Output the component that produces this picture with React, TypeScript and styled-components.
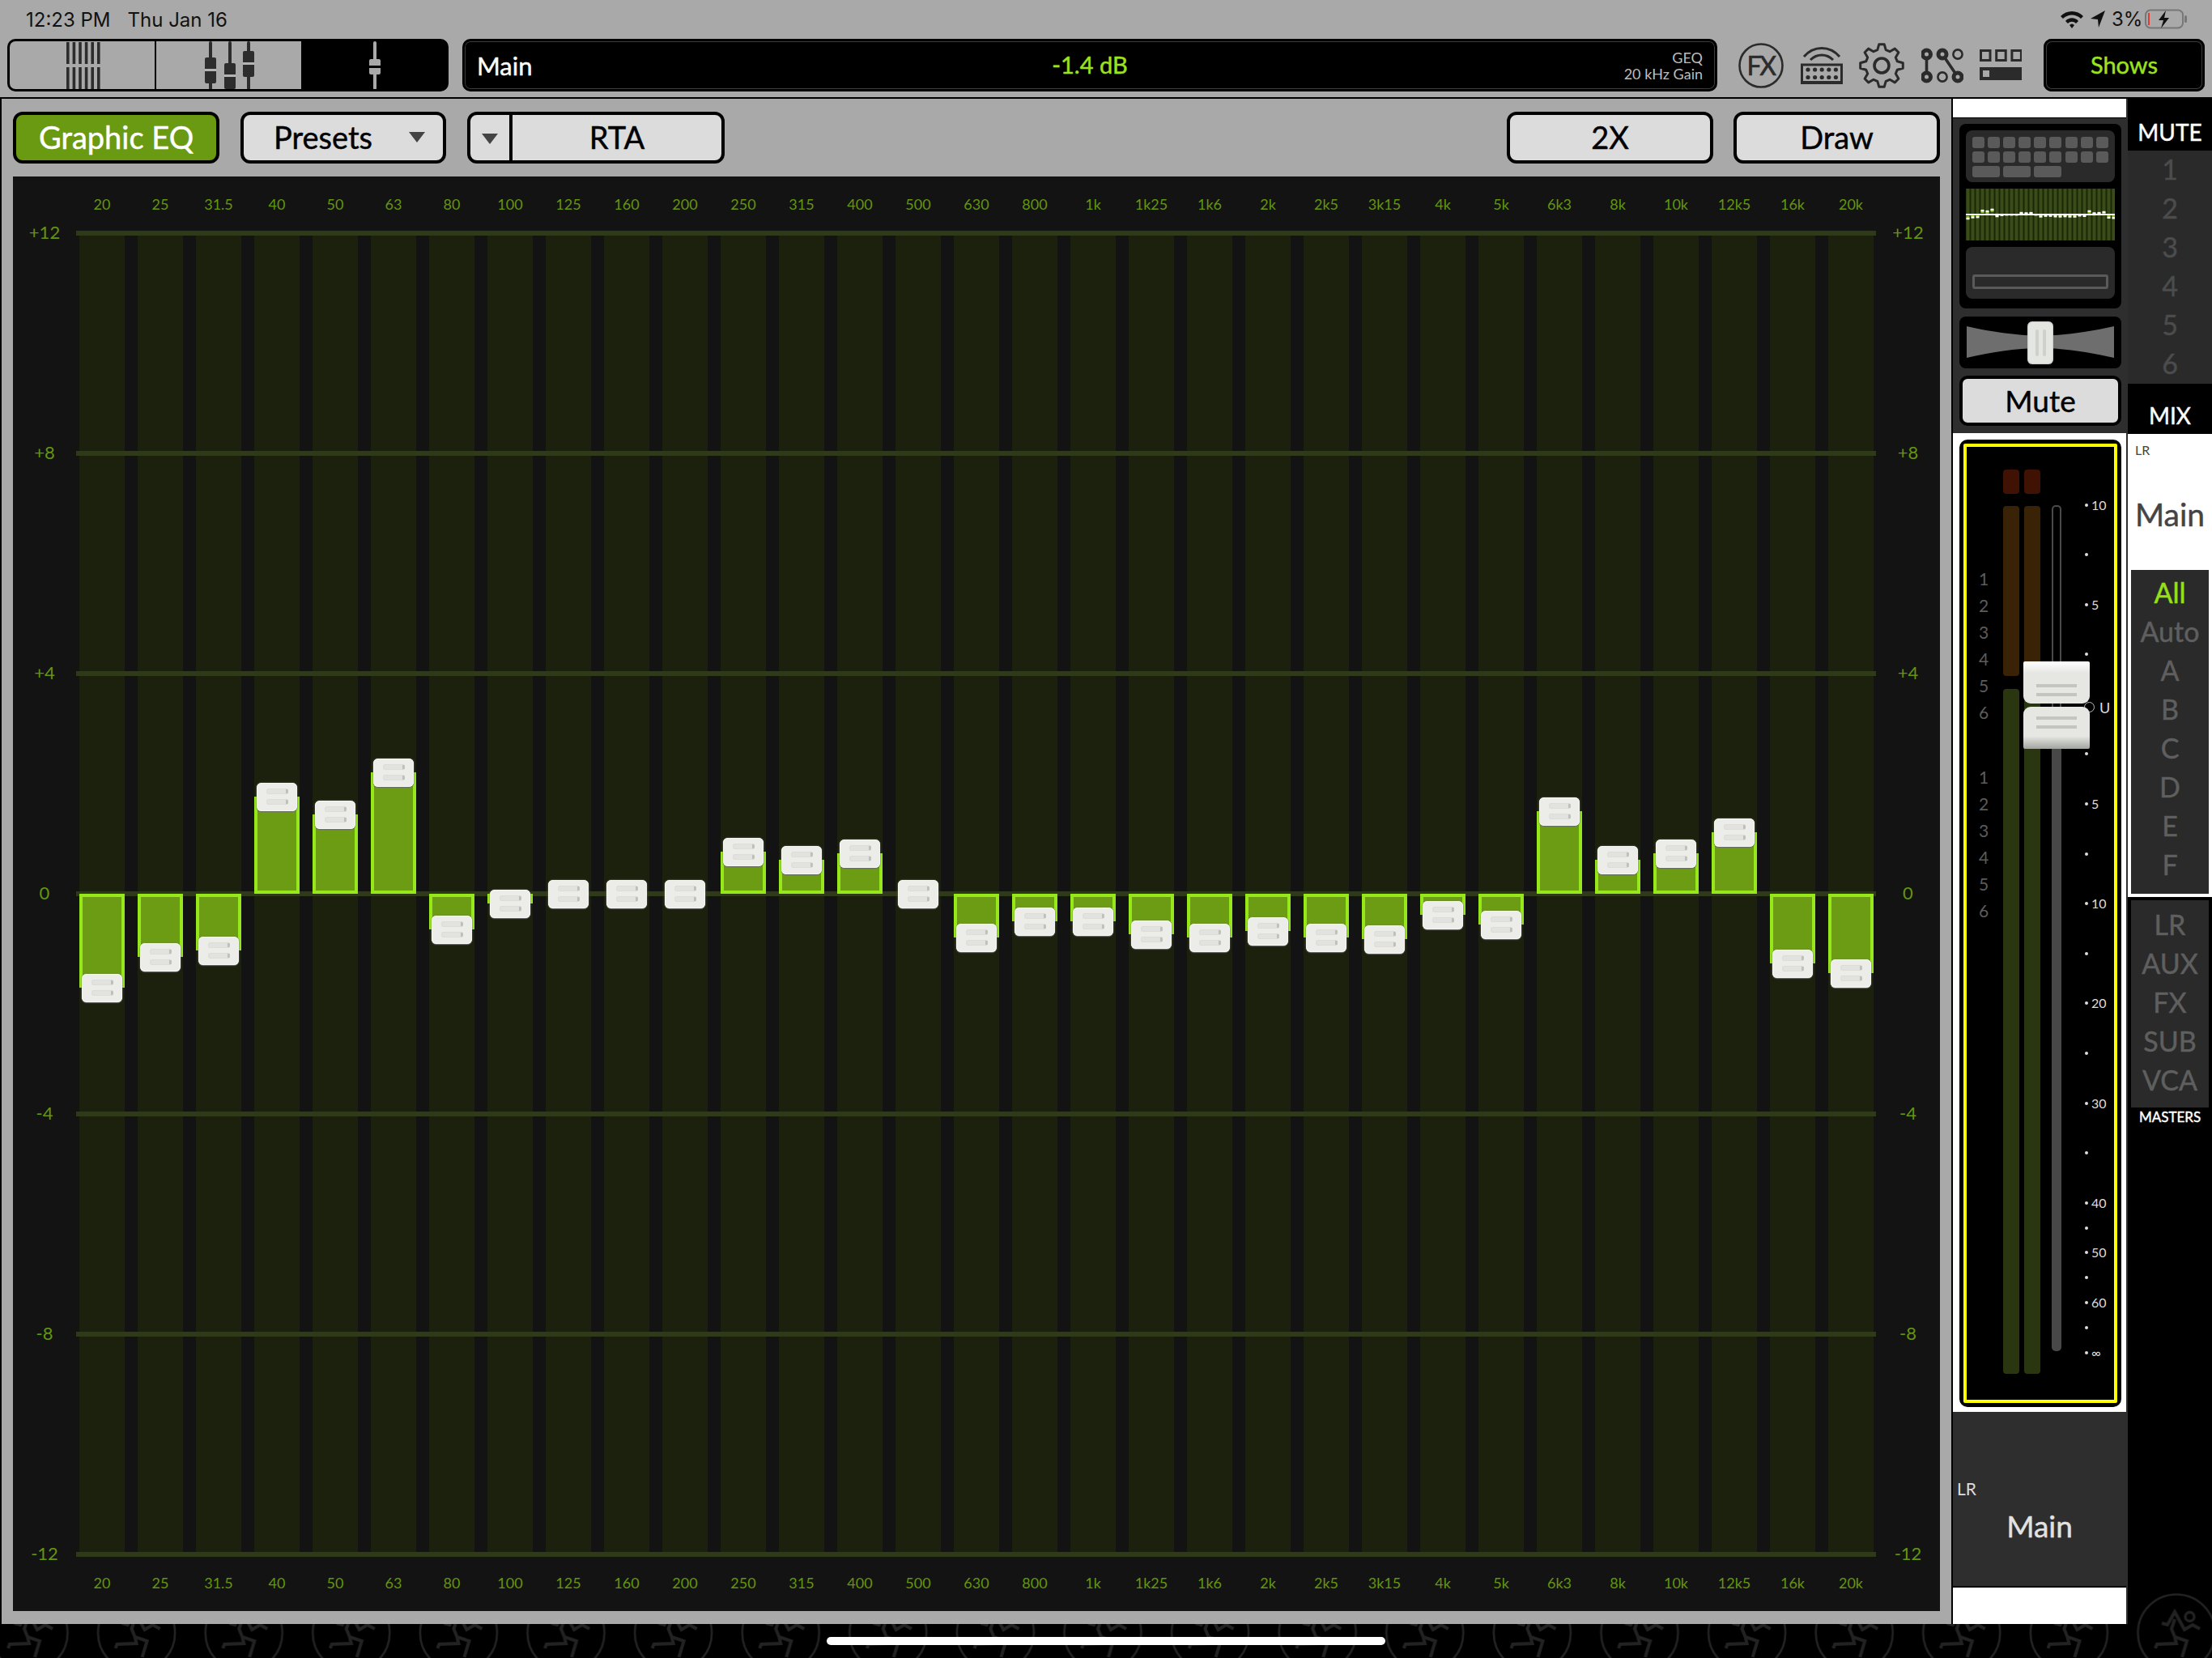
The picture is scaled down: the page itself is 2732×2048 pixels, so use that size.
import { FC } from 'react';
import styled, { createGlobalStyle } from 'styled-components';

const FONT = `Lato, 'Open Sans', sans-serif`;
const ZERO_Y = 819;

// offset of each band's end from the zero line, in pixels (up is positive)
const BANDS: { name: string; px: number }[] = [
	{ name: '20', px: -116 },
	{ name: '25', px: -78 },
	{ name: '31.5', px: -70 },
	{ name: '40', px: 120 },
	{ name: '50', px: 98 },
	{ name: '63', px: 150 },
	{ name: '80', px: -44 },
	{ name: '100', px: -12 },
	{ name: '125', px: 0 },
	{ name: '160', px: 0 },
	{ name: '200', px: 0 },
	{ name: '250', px: 52 },
	{ name: '315', px: 42 },
	{ name: '400', px: 50 },
	{ name: '500', px: 0 },
	{ name: '630', px: -54 },
	{ name: '800', px: -34 },
	{ name: '1k', px: -34 },
	{ name: '1k25', px: -50 },
	{ name: '1k6', px: -54 },
	{ name: '2k', px: -46 },
	{ name: '2k5', px: -54 },
	{ name: '3k15', px: -56 },
	{ name: '4k', px: -26 },
	{ name: '5k', px: -38 },
	{ name: '6k3', px: 102 },
	{ name: '8k', px: 42 },
	{ name: '10k', px: 50 },
	{ name: '12k5', px: 76 },
	{ name: '16k', px: -86 },
	{ name: '20k', px: -98 },
];

const SCALE = ['+12', '+8', '+4', '0', '-4', '-8', '-12'];

const FADER_MARKS: { label?: string; gap: number; unity?: boolean }[] = [
	{ label: '10', gap: 71.5 },
	{ gap: 61.6 },
	{ label: '5', gap: 61.6 },
	{ gap: 61.6 },
	{ label: 'U', gap: 65.6, unity: true },
	{ gap: 57.6 },
	{ label: '5', gap: 61.6 },
	{ gap: 61.6 },
	{ label: '10', gap: 61.6 },
	{ gap: 61.6 },
	{ label: '20', gap: 61.6 },
	{ gap: 61.6 },
	{ label: '30', gap: 61.6 },
	{ gap: 61.6 },
	{ label: '40', gap: 61.6 },
	{ gap: 30.8 },
	{ label: '50', gap: 30.8 },
	{ gap: 30.8 },
	{ label: '60', gap: 30.8 },
	{ gap: 30.8 },
	{ label: '∞', gap: 30.8 },
];

const GlobalStyle = createGlobalStyle`
	html, body {
		margin: 0;
		padding: 0;
		background: #000;
	}
	* {
		box-sizing: border-box;
	}
`;

const medium = `-webkit-text-stroke: 0.45px currentColor;`;

const FaderIcons = () => (
	<svg width="62" height="60" viewBox="0 0 62 60">
		{[
			[8, 20],
			[32, 27],
			[55, 12],
		].map(([x, y]) => (
			<g key={x}>
				<rect x={x - 2} y={0} width={4} height={60} rx={2} fill="#2d2d2d" />
				<rect x={x - 7} y={y} width={14} height={32} rx={2} fill="#2d2d2d" />
				<rect x={x - 7} y={y + 14} width={14} height={3} fill="#b5b5b5" />
			</g>
		))}
	</svg>
);

const ChannelIcons = () => (
	<svg width="44" height="60" viewBox="0 0 44 60">
		{[0, 1].map((row) =>
			[0, 1, 2, 3, 4, 5].map((col) => (
				<rect
					key={`${row}-${col}`}
					x={2 + col * 7.6}
					y={1 + row * 31}
					width={3.6}
					height={27}
					fill="#2d2d2d"
				/>
			))
		)}
	</svg>
);

const SingleFaderIcon = () => (
	<svg width="16" height="60" viewBox="0 0 16 60">
		<rect x={6} y={0} width={4} height={60} rx={2} fill="#a9a9a9" />
		<rect x={1} y={22} width={14} height={19} rx={2} fill="#a9a9a9" />
		<rect x={1} y={30} width={14} height={3} fill="#000" />
	</svg>
);

const FxIcon = () => (
	<svg width="56" height="56" viewBox="0 0 56 56">
		<circle cx="28" cy="28" r="26.5" fill="none" stroke="#2b2b2b" strokeWidth="2.6" />
		<text
			x="27.5"
			y="39.5"
			textAnchor="middle"
			fontFamily="Lato, sans-serif"
			fontSize="32"
			letterSpacing="-2.5"
			fill="#2b2b2b"
			stroke="#2b2b2b"
			strokeWidth="0.6"
		>
			FX
		</text>
	</svg>
);

const WifiKeysIcon = () => (
	<svg width="52" height="48" viewBox="0 0 52 48">
		<path d="M4 13C16 -1 36 -1 48 13" fill="none" stroke="#2b2b2b" strokeWidth="3" />
		<path d="M12 17C20 9 32 9 40 17" fill="none" stroke="#2b2b2b" strokeWidth="3" />
		<rect x="1.5" y="23" width="49" height="22" fill="none" stroke="#2b2b2b" strokeWidth="3" />
		<rect x="0" y="43" width="52" height="4" fill="#2b2b2b" />
		{[0, 1].map((row) =>
			[0, 1, 2, 3, 4].map((col) => (
				<circle key={`${row}${col}`} cx={9 + col * 8.6} cy={29 + row * 9.5} r={2.6} fill="#2b2b2b" />
			))
		)}
	</svg>
);

const gearPath = () => {
	const pts: string[] = [];
	const polar = (r: number, deg: number) => {
		const a = ((deg - 90) * Math.PI) / 180;
		return `${(28 + r * Math.cos(a)).toFixed(1)} ${(28 + r * Math.sin(a)).toFixed(1)}`;
	};
	for (let i = 0; i < 8; i++) {
		const c = i * 45;
		pts.push(polar(20, c - 15), polar(26.5, c - 7), polar(26.5, c + 7), polar(20, c + 15));
	}
	return `M${pts.join('L')}Z`;
};

const GearIcon = () => (
	<svg width="56" height="56" viewBox="0 0 56 56">
		<path d={gearPath()} fill="none" stroke="#2b2b2b" strokeWidth="3" strokeLinejoin="round" />
		<circle cx="28" cy="28" r="9" fill="none" stroke="#2b2b2b" strokeWidth="3.6" />
	</svg>
);

const RoutingIcon = () => (
	<svg width="52" height="44" viewBox="0 0 52 44">
		<path d="M6.5 8V36M26 8L45 36" stroke="#2b2b2b" strokeWidth="3.6" fill="none" />
		{[
			[6.5, 8, 5],
			[26, 8, 5],
			[6.5, 36, 5],
			[45, 36, 5],
		].map(([x, y, w]) => (
			<circle key={`${x}${y}`} cx={x} cy={y} r={5} fill="#a9a9a9" stroke="#2b2b2b" strokeWidth={w} />
		))}
		{[
			[45, 8],
			[26, 36],
		].map(([x, y]) => (
			<circle key={`${x}${y}`} cx={x} cy={y} r={5.6} fill="none" stroke="#2b2b2b" strokeWidth={2.6} />
		))}
	</svg>
);

const PanelsIcon = () => (
	<svg width="52" height="40" viewBox="0 0 52 40">
		{[0, 1, 2].map((i) => (
			<rect key={i} x={1.5 + i * 19.2} y={1.5} width={11.5} height={12} fill="none" stroke="#2b2b2b" strokeWidth="3" />
		))}
		<rect x="0" y="22" width="52" height="16" fill="#2b2b2b" />
		<rect x="4" y="26" width="8" height="8" fill="#a9a9a9" />
	</svg>
);

const StatusIcons = () => (
	<svg width="160" height="26" viewBox="0 0 160 26">
		<g transform="translate(2 0)">
			<path d="M1 9C8 1 22 1 29 9L26 12C20 6 10 6 4 12Z" fill="#111" />
			<path d="M7 15C11 10 19 10 23 15L20 18C17 15 13 15 10 18Z" fill="#111" />
			<path d="M12 20C14 18 16 18 18 20L15 24Z" fill="#111" />
		</g>
		<path d="M58 2L40 12L49 13L50 23Z" fill="#111" />
		<g transform="translate(14 0)">
			<rect x="94" y="1.5" width="46" height="22" rx="6" fill="none" stroke="#777" strokeWidth="2" />
			<rect x="97" y="5" width="2" height="15" fill="#e03b30" />
			<path d="M119 2L110 14H116L113 24L123 11H117Z" fill="#111" />
			<rect x="142" y="8" width="3" height="9" rx="1.5" fill="#777" />
		</g>
	</svg>
);

const EqThumb = () => (
	<svg width="184" height="64" viewBox="0 0 184 64">
		<rect width="184" height="64" fill="#1c2609" />
		{BANDS.map((b, i) => {
			const x = i * 6 + 0.5;
			const y = 32 - b.px * 0.042;
			return (
				<g key={b.name}>
					<rect x={x} y={0} width={4} height={64} fill="#3a4d18" />
					{Math.abs(b.px) > 40 && (
						<rect x={x} y={y < 32 ? y : y - 3} width={4} height={3} fill="#86c91a" />
					)}
					<rect x={x} y={y - 1} width={4} height={2.4} fill="#fff" />
				</g>
			);
		})}
		<rect x="0" y="31" width="184" height="2" fill="#fff" />
	</svg>
);

const Bowtie = () => (
	<svg width="182" height="40" viewBox="0 0 182 40">
		<path d="M0 0C30 7 60 11 91 12C122 11 152 7 182 0V39C152 32 122 27 91 27C60 27 30 32 0 39Z" fill="#6e6e6e" />
	</svg>
);

const MackieLogos = () => (
	<BackdropSvg width="2732" height="98" viewBox="0 0 2732 98">
		<defs>
			<pattern id="mackie" width="132.6" height="98" patternUnits="userSpaceOnUse" x="-30.3">
				<g fill="none" stroke="#222" transform="translate(66.3 67)">
					<circle r="47.5" strokeWidth="2.6" />
					<circle cx="16.5" cy="-20" r="5.5" strokeWidth="3.4" />
					<path
						d="M-18 -12L-11 -10L-2 -26L10 -4L20 -10L29 -5M-2 -17L-6 -5L-2 5L13 10L7 30M-2 5L0 13L-24 14L-26 19"
						strokeWidth="4"
					/>
				</g>
			</pattern>
		</defs>
		<rect width="2732" height="98" fill="url(#mackie)" />
	</BackdropSvg>
);

const App: FC = () => {
	return (
		<Page>
			<GlobalStyle />
			<MackieLogos />
			<Header>
				<StatusBar>
					<Clock>12:23 PM</Clock>
					<Clock>Thu Jan 16</Clock>
					<StatusRight>
						<StatusIcons />
						<BatteryText>3%</BatteryText>
					</StatusRight>
				</StatusBar>
				<Toolbar>
					<ViewNav>
						<NavSegment>
							<ChannelIcons />
						</NavSegment>
						<NavSegment>
							<FaderIcons />
						</NavSegment>
						<NavSegment $active>
							<SingleFaderIcon />
						</NavSegment>
					</ViewNav>
					<Display>
						<DisplayName>Main</DisplayName>
						<DisplayValue>-1.4 dB</DisplayValue>
						<DisplayInfo>
							<span>GEQ</span>
							<span>20 kHz Gain</span>
						</DisplayInfo>
					</Display>
					<IconRow>
						<FxIcon />
						<WifiKeysIcon />
						<GearIcon />
						<RoutingIcon />
						<PanelsIcon />
					</IconRow>
					<ShowsButton>Shows</ShowsButton>
				</Toolbar>
			</Header>
			<Body>
				<MainPanel>
					<ButtonRow>
						<ToolButton $active>Graphic EQ</ToolButton>
						<PresetsButton>
							Presets
							<Caret />
						</PresetsButton>
						<RtaGroup>
							<RtaCaret>
								<Caret />
							</RtaCaret>
							<RtaLabel>RTA</RtaLabel>
						</RtaGroup>
						<RightButtons>
							<ToolButton>2X</ToolButton>
							<ToolButton>Draw</ToolButton>
						</RightButtons>
					</ButtonRow>
					<EqPanel>
						<FreqRow>
							{BANDS.map((b) => (
								<FreqLabel key={b.name}>{b.name}</FreqLabel>
							))}
						</FreqRow>
						<GraphRow>
							<ScaleColumn>
								{SCALE.map((s) => (
									<ScaleLabel key={s}>{s}</ScaleLabel>
								))}
							</ScaleColumn>
							<Plot>
								<ColumnLayer>
									{BANDS.map((b) => (
										<BandColumn key={b.name} />
									))}
								</ColumnLayer>
								<GridLines>
									{SCALE.map((s) => (
										<GridLine key={s} />
									))}
								</GridLines>
								<BarLayer>
									{BANDS.map((b) => (
										<BarCell key={b.name}>
											{b.px !== 0 && (
												<Bar
													$up={b.px > 0}
													style={{
														top: b.px > 0 ? ZERO_Y - b.px : ZERO_Y,
														height: Math.abs(b.px),
													}}
												/>
											)}
											<BandHandle style={{ top: ZERO_Y - b.px - 17.5 }}>
												<HandleMark />
												<HandleMark />
											</BandHandle>
										</BarCell>
									))}
								</BarLayer>
							</Plot>
							<ScaleColumn>
								{SCALE.map((s) => (
									<ScaleLabel key={s}>{s}</ScaleLabel>
								))}
							</ScaleColumn>
						</GraphRow>
						<FreqRow $bottom>
							{BANDS.map((b) => (
								<FreqLabel key={b.name}>{b.name}</FreqLabel>
							))}
						</FreqRow>
					</EqPanel>
				</MainPanel>
				<StripColumn>
					<WhiteCap />
					<StripTop>
						<ThumbBox>
							<KeysPanel>
								{Array.from({ length: 18 }).map((_, i) => (
									<ThumbKey key={i} />
								))}
								<WideKey />
								<WideKey />
								<WideKey />
							</KeysPanel>
							<EqThumb />
							<SendsPanel>
								<SendsBar />
							</SendsPanel>
						</ThumbBox>
						<PanBox>
							<Bowtie />
							<PanHandle>
								<PanGroove />
								<PanGroove />
							</PanHandle>
						</PanBox>
						<MuteButton>Mute</MuteButton>
					</StripTop>
					<FaderArea>
						<FaderFrame>
							<FaderInner>
								<MeterNumbers>
									{[1, 2, 3, 4, 5, 6].map((n) => (
										<MeterNumber key={n}>{n}</MeterNumber>
									))}
									<NumberSpacer />
									{[1, 2, 3, 4, 5, 6].map((n) => (
										<MeterNumber key={n + 10}>{n}</MeterNumber>
									))}
								</MeterNumbers>
								{[0, 1].map((i) => (
									<Meter key={i}>
										<MeterClip />
										<MeterHot />
										<MeterLow />
									</Meter>
								))}
								<FaderTrack>
									<TrackOutline />
									<TrackFill />
								</FaderTrack>
								<FaderScale>
									{FADER_MARKS.map((m, i) => (
										<ScaleMark key={i} $gap={m.gap}>
											{m.unity ? <UnityRing /> : <ScaleDot />}
											{m.label && <ScaleValue $unity={m.unity}>{m.label}</ScaleValue>}
										</ScaleMark>
									))}
								</FaderScale>
								<FaderCap>
									<CapTop>
										<CapLine />
										<CapLine />
									</CapTop>
									<CapBottom>
										<CapLine />
										<CapLine />
									</CapBottom>
								</FaderCap>
							</FaderInner>
						</FaderFrame>
					</FaderArea>
					<ChannelName>
						<ChannelTag>LR</ChannelTag>
						<ChannelTitle>Main</ChannelTitle>
					</ChannelName>
					<WhiteFoot />
				</StripColumn>
				<SideColumn>
					<SideHeader>MUTE</SideHeader>
					<SideList>
						{['1', '2', '3', '4', '5', '6'].map((n) => (
							<SideItem key={n} $dim>
								{n}
							</SideItem>
						))}
					</SideList>
					<SideHeader $tall>MIX</SideHeader>
					<WhiteSection>
						<SideTag>LR</SideTag>
						<SideTitle>Main</SideTitle>
						<SideList $boxed>
							<SideItem $selected>All</SideItem>
							{['Auto', 'A', 'B', 'C', 'D', 'E', 'F'].map((n) => (
								<SideItem key={n}>{n}</SideItem>
							))}
						</SideList>
					</WhiteSection>
					<MastersBox>
						{['LR', 'AUX', 'FX', 'SUB', 'VCA'].map((n) => (
							<SideItem key={n}>{n}</SideItem>
						))}
					</MastersBox>
					<MastersLabel>MASTERS</MastersLabel>
				</SideColumn>
			</Body>
			<HomeIndicator />
		</Page>
	);
};

const Page = styled.div`
	position: relative;
	width: 2732px;
	height: 2048px;
	overflow: hidden;
	background: #000;
	font-family: ${FONT};
	display: flex;
	flex-direction: column;
`;

const BackdropSvg = styled.svg`
	position: absolute;
	left: 0;
	bottom: 0;
`;

const Header = styled.header`
	position: relative;
	height: 122px;
	background: #a9a9a9;
	border-bottom: 2px solid #000;
`;

const StatusBar = styled.div`
	display: flex;
	align-items: center;
	height: 48px;
	padding: 0 30px 0 32px;
	gap: 21px;
`;

const Clock = styled.span`
	font-family: Inter, 'Liberation Sans', sans-serif;
	font-size: 24px;
	color: #111;
`;

const StatusRight = styled.div`
	position: relative;
	margin-left: auto;
	display: flex;
	align-items: center;
`;

const BatteryText = styled.span`
	position: absolute;
	left: 66px;
	top: -2px;
	font-family: Inter, 'Liberation Sans', sans-serif;
	font-size: 24px;
	color: #111;
`;

const Toolbar = styled.div`
	display: flex;
	align-items: center;
	height: 65px;
	padding-left: 9px;
`;

const ViewNav = styled.nav`
	display: grid;
	grid-template-columns: 179px 181px 1fr;
	width: 545px;
	height: 65px;
	margin-right: 17px;
	border: 3px solid #000;
	border-radius: 10px;
	overflow: hidden;
	background: #000;
`;

const NavSegment = styled.div<{ $active?: boolean }>`
	display: flex;
	align-items: center;
	justify-content: center;
	background: ${(p) => (p.$active ? '#000' : '#a9a9a9')};
	& + & {
		border-left: 2px solid #000;
	}
`;

const Display = styled.div`
	display: grid;
	grid-template-columns: 1fr auto 1fr;
	align-items: center;
	width: 1550px;
	height: 65px;
	padding: 0 15px 0 15px;
	background: #000;
	border: 3px solid #000;
	border-radius: 10px;
	box-shadow: inset 0 0 0 1px #3c3c3c;
`;

const DisplayName = styled.span`
	${medium}
	font-size: 31px;
	color: #fff;
`;

const DisplayValue = styled.span`
	${medium}
	padding-bottom: 2px;
	font-size: 29px;
	color: #9de21f;
`;

const DisplayInfo = styled.div`
	display: flex;
	flex-direction: column;
	align-items: flex-end;
	font-size: 18px;
	line-height: 20px;
	color: #bdbdbd;
`;

const IconRow = styled.div`
	display: flex;
	align-items: center;
	gap: 20.5px;
	margin-left: 26px;
`;

const ShowsButton = styled.div`
	${medium}
	display: flex;
	align-items: center;
	justify-content: center;
	width: 199px;
	height: 65px;
	margin-left: 27px;
	padding-bottom: 2px;
	font-size: 29px;
	color: #9de21f;
	background: #000;
	border-radius: 10px;
	box-shadow: inset 0 0 0 3px #000, inset 0 0 0 4px #3c3c3c;
`;

const Body = styled.div`
	position: relative;
	display: flex;
	height: 1926px;
`;

const MainPanel = styled.main`
	width: 2410px;
	height: 1884px;
	padding: 16px 14px 16px 14px;
	background: #a9a9a9;
	border-left: 2px solid #000;
	display: flex;
	flex-direction: column;
	gap: 16px;
`;

const ButtonRow = styled.div`
	display: flex;
	gap: 26px;
	height: 64px;
`;

const RightButtons = styled.div`
	display: flex;
	gap: 25px;
	margin-left: auto;
`;

const buttonFace = `
	${medium}
	height: 64px;
	padding-bottom: 3px;
	border: 4px solid #000;
	border-radius: 12px;
	font-size: 38px;
	color: #000;
	background: #dcdcdc;
`;

const ToolButton = styled.div<{ $active?: boolean }>`
	${buttonFace}
	display: flex;
	align-items: center;
	justify-content: center;
	width: 255px;
	color: ${(p) => (p.$active ? '#fff' : '#000')};
	background: ${(p) => (p.$active ? '#6a9a12' : '#dcdcdc')};
`;

const PresetsButton = styled.div`
	${buttonFace}
	display: flex;
	align-items: center;
	justify-content: space-between;
	width: 254px;
	padding: 0 22px 3px 37px;
`;

const Caret = styled.span`
	width: 0;
	height: 0;
	margin-top: 2px;
	border-left: 10px solid transparent;
	border-right: 10px solid transparent;
	border-top: 13px solid #444;
`;

const RtaGroup = styled.div`
	${buttonFace}
	display: grid;
	grid-template-columns: 52px 1fr;
	width: 318px;
	padding-bottom: 0;
`;

const RtaCaret = styled.div`
	display: flex;
	align-items: center;
	justify-content: center;
	border-right: 4px solid #000;
`;

const RtaLabel = styled.div`
	display: flex;
	align-items: center;
	justify-content: center;
	padding-bottom: 3px;
`;

const EqPanel = styled.section`
	flex: 1;
	display: flex;
	flex-direction: column;
	background: #131313;
`;

const FreqRow = styled.div<{ $bottom?: boolean }>`
	display: grid;
	grid-template-columns: repeat(31, 56px);
	column-gap: 16px;
	align-items: center;
	height: 67px;
	padding-left: 82px;
	padding-bottom: ${(p) => (p.$bottom ? 4 : 0)}px;
`;

const FreqLabel = styled.span`
	font-size: 18px;
	text-align: center;
	white-space: nowrap;
	color: #64950f;
`;

const GraphRow = styled.div`
	flex: 1;
	display: grid;
	grid-template-columns: 78px 2223px 79px;
`;

const ScaleColumn = styled.div`
	display: flex;
	flex-direction: column;
	justify-content: space-between;
`;

const ScaleLabel = styled.span`
	height: 6px;
	line-height: 4px;
	font-size: 22px;
	text-align: center;
	color: #64950f;
`;

const Plot = styled.div`
	position: relative;
`;

const bandGrid = `
	display: grid;
	grid-template-columns: repeat(31, 56px);
	column-gap: 16px;
	padding: 3px 0 3px 4px;
`;

const ColumnLayer = styled.div`
	${bandGrid}
	height: 100%;
`;

const BandColumn = styled.div`
	background: #1c210e;
`;

const GridLines = styled.div`
	position: absolute;
	inset: 0;
	display: flex;
	flex-direction: column;
	justify-content: space-between;
`;

const GridLine = styled.div`
	height: 6px;
	background: #2f3a18;
`;

const BarLayer = styled.div`
	${bandGrid}
	position: absolute;
	inset: 0;
	padding: 0 0 0 4px;
`;

const BarCell = styled.div`
	position: relative;
`;

const Bar = styled.div<{ $up: boolean }>`
	position: absolute;
	left: 0;
	right: 0;
	background: #6b9c14;
	border: 0 solid #96e81a;
	border-left-width: 4px;
	border-right-width: 4px;
	${(p) => (p.$up ? 'border-bottom-width: 4px;' : 'border-top-width: 4px;')}
`;

const BandHandle = styled.div`
	position: absolute;
	left: 3px;
	width: 50px;
	height: 35px;
	display: flex;
	flex-direction: column;
	align-items: center;
	justify-content: center;
	gap: 6px;
	background: #ecede9;
	border-radius: 6px;
	box-shadow: inset 0 0 0 1px #f6f6f4, 0 0 2px #777, 0 1px 1px #666;
`;

const HandleMark = styled.span`
	width: 27px;
	height: 7px;
	border: 1px solid #dcddd9;
	border-right: 3px solid #bfc0bc;
	border-radius: 3px;
	background: #e2e3df;
`;

const StripColumn = styled.div`
	width: 218px;
	height: 1884px;
	border-left: 2px solid #000;
	border-right: 2px solid #2e2e2e;
	display: flex;
	flex-direction: column;
	background: #fff;
`;

const WhiteCap = styled.div`
	height: 24px;
	background: #fff;
	border-bottom: 1px solid #000;
`;

const StripTop = styled.div`
	height: 389px;
	padding: 7px 6px 0 8px;
	margin-right: -2px;
	background: #2e2e2e;
	display: flex;
	flex-direction: column;
	width: 216px;
`;

const ThumbBox = styled.div`
	display: flex;
	flex-direction: column;
	gap: 8px;
	width: 200px;
	height: 228px;
	padding: 8px;
	background: #000;
	border-radius: 8px;
`;

const KeysPanel = styled.div`
	display: grid;
	grid-template-columns: repeat(9, 15px);
	grid-auto-rows: 14px;
	gap: 4px 4.1px;
	height: 64px;
	padding: 8px;
	background: #2a2a2a;
	border-radius: 8px;
`;

const ThumbKey = styled.span`
	background: #5a5a5a;
	border-radius: 3px;
`;

const WideKey = styled.span`
	grid-column: span 2;
	background: #5a5a5a;
	border-radius: 3px;
`;

const SendsPanel = styled.div`
	display: flex;
	align-items: flex-end;
	height: 64px;
	padding: 0 8px 12px;
	background: #2a2a2a;
	border-radius: 8px;
`;

const SendsBar = styled.div`
	width: 100%;
	height: 18px;
	border: 3px solid #5a5a5a;
	border-radius: 3px;
`;

const PanBox = styled.div`
	position: relative;
	display: flex;
	align-items: center;
	justify-content: center;
	width: 200px;
	height: 64px;
	margin-top: 10px;
	background: #000;
	border-radius: 8px;
`;

const PanHandle = styled.div`
	position: absolute;
	left: 84px;
	top: 6px;
	width: 32px;
	height: 53px;
	display: flex;
	align-items: stretch;
	justify-content: center;
	gap: 5px;
	padding: 10px 0;
	background: #e4e6e2;
	border-radius: 6px;
	box-shadow: inset 0 0 2px #999;
`;

const PanGroove = styled.span`
	width: 4px;
	border-radius: 2px;
	background: #cfd1cd;
`;

const MuteButton = styled.div`
	${medium}
	display: flex;
	align-items: center;
	justify-content: center;
	width: 200px;
	height: 62px;
	margin-top: 9px;
	padding-bottom: 2px;
	font-size: 37px;
	color: #000;
	background: #dcdcdc;
	border: 4px solid #000;
	border-radius: 10px;
`;

const FaderArea = styled.div`
	height: 1209px;
	padding: 8px 6px 6px 8px;
	background: #fff;
`;

const FaderFrame = styled.div`
	height: 1195px;
	width: 200px;
	padding: 0;
	border: 5px solid #000;
	border-radius: 10px;
	background: #000;
`;

const FaderInner = styled.div`
	position: relative;
	display: flex;
	height: 100%;
	background: #000;
	border: 4px solid #ff0;
	border-radius: 2px;
`;

const MeterNumbers = styled.div`
	display: flex;
	flex-direction: column;
	align-items: center;
	width: 42px;
	margin-right: 3px;
	padding-top: 146px;
`;

const MeterNumber = styled.span`
	height: 33px;
	line-height: 33px;
	font-size: 21px;
	color: #5c5c5c;
`;

const NumberSpacer = styled.div`
	height: 47px;
	flex: none;
`;

const Meter = styled.div`
	display: flex;
	flex-direction: column;
	width: 20px;
	height: 1145px;
	margin-right: 6px;
	padding-top: 28px;
`;

const MeterClip = styled.div`
	height: 30px;
	border-radius: 4px;
	background: #3f1204;
`;

const MeterHot = styled.div`
	height: 210px;
	margin-top: 15px;
	border-radius: 4px;
	background: #3a2206;
`;

const MeterLow = styled.div`
	flex: 1;
	margin-top: 16px;
	border-radius: 4px;
	background: #2a3610;
`;

const FaderTrack = styled.div`
	display: flex;
	flex-direction: column;
	width: 12px;
	margin-left: 8px;
	padding-top: 72px;
`;

const TrackOutline = styled.div`
	height: 250px;
	border: 2px solid #4a4a4a;
	border-bottom: none;
	border-radius: 5px 5px 0 0;
`;

const TrackFill = styled.div`
	height: 795px;
	background: #484848;
	border-radius: 0 0 5px 5px;
`;

const FaderScale = styled.div`
	display: flex;
	flex-direction: column;
	margin-left: 29px;
`;

const ScaleMark = styled.div<{ $gap: number }>`
	display: flex;
	align-items: center;
	height: 0;
	margin-top: ${(p) => p.$gap}px;
`;

const ScaleDot = styled.span`
	flex: none;
	width: 4px;
	height: 4px;
	border-radius: 50%;
	background: #ddd;
`;

const UnityRing = styled.span`
	flex: none;
	width: 13px;
	height: 13px;
	margin-left: -1px;
	border: 1.5px solid #bbb;
	border-radius: 50%;
	background: #000;
`;

const ScaleValue = styled.span<{ $unity?: boolean }>`
	margin-left: ${(p) => (p.$unity ? 6 : 4)}px;
	font-size: ${(p) => (p.$unity ? 18 : 16)}px;
	line-height: 16px;
	color: #ddd;
`;

const FaderCap = styled.div`
	position: absolute;
	left: 70px;
	top: 265px;
	width: 82px;
	display: flex;
	flex-direction: column;
	gap: 4px;
`;

const CapTop = styled.div`
	display: flex;
	flex-direction: column;
	align-items: center;
	justify-content: flex-end;
	gap: 7px;
	height: 52px;
	padding-bottom: 9px;
	background: linear-gradient(#fff, #e6e7e3 28%);
	border-radius: 2px 2px 9px 9px;
`;

const CapBottom = styled.div`
	display: flex;
	flex-direction: column;
	align-items: center;
	gap: 7px;
	height: 52px;
	padding-top: 12px;
	background: linear-gradient(#e6e7e3 70%, #a2a49f);
	border-radius: 9px 9px 2px 2px;
`;

const CapLine = styled.span`
	width: 50px;
	height: 4px;
	background: #c4c5c1;
`;

const ChannelName = styled.div`
	position: relative;
	display: flex;
	align-items: center;
	justify-content: center;
	height: 215px;
	padding-top: 66px;
	background: #2e2e2e;
`;

const ChannelTag = styled.span`
	position: absolute;
	left: 5px;
	top: 82px;
	font-size: 21px;
	color: #ddd;
`;

const ChannelTitle = styled.span`
	${medium}
	font-size: 37px;
	color: #e2e2e2;
`;

const WhiteFoot = styled.div`
	flex: 1;
	background: #fff;
	border-top: 2px solid #000;
`;

const SideColumn = styled.aside`
	position: relative;
	display: flex;
	flex-direction: column;
	align-items: center;
	width: 104px;
`;

const SideHeader = styled.div<{ $tall?: boolean }>`
	${medium}
	display: flex;
	align-items: flex-end;
	justify-content: center;
	width: 100%;
	height: ${(p) => (p.$tall ? 62 : 64)}px;
	padding-bottom: 6px;
	font-size: 28px;
	color: #fff;
	background: #000;
`;

const SideList = styled.div<{ $boxed?: boolean }>`
	display: flex;
	flex-direction: column;
	width: ${(p) => (p.$boxed ? '96px' : '100%')};
	background: #2a2a2a;
	${(p) => (p.$boxed ? 'padding: 5px 0 11px;' : '')}
`;

const SideItem = styled.div<{ $selected?: boolean; $dim?: boolean }>`
	${medium}
	height: 48px;
	line-height: 46px;
	font-size: 34px;
	text-align: center;
	color: ${(p) => (p.$selected ? '#96e01a' : p.$dim ? '#4c4c4c' : '#5f5f5f')};
`;

const WhiteSection = styled.div`
	display: flex;
	flex-direction: column;
	align-items: center;
	width: 100%;
	height: 572px;
	background: #fff;
`;

const SideTag = styled.span`
	align-self: flex-start;
	margin: 11px 0 0 9px;
	font-size: 16px;
	line-height: 18px;
	color: #444;
`;

const SideTitle = styled.span`
	${medium}
	height: 139px;
	padding-top: 45px;
	font-size: 39px;
	line-height: 50px;
	color: #444;
`;

const MastersBox = styled.div`
	width: 96px;
	margin-top: 4px;
	padding-top: 7px;
	height: 256px;
	background: #2a2a2a;
`;

const MastersLabel = styled.span`
	${medium}
	margin-top: 2px;
	font-size: 17px;
	line-height: 20px;
	color: #fff;
`;

const HomeIndicator = styled.div`
	position: absolute;
	left: 1021px;
	top: 2022px;
	width: 690px;
	height: 10px;
	background: #fff;
	border-radius: 5px;
`;

export default App;
